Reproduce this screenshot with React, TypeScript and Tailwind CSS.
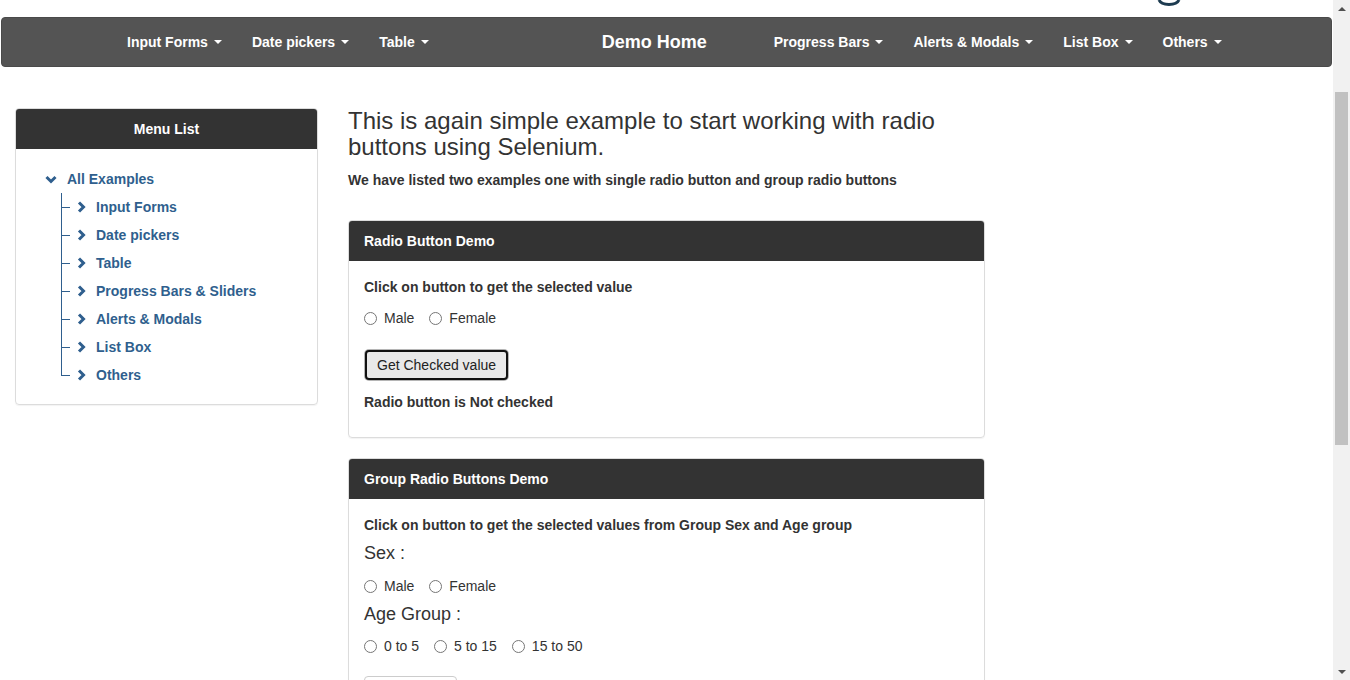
import React from 'react';

const font = { fontFamily: '"Liberation Sans", Arial, sans-serif' };

const Caret: React.FC = () => (
    <span className="inline-block ml-[6px] w-0 h-0 border-t-[4px] border-t-white border-x-[4px] border-x-transparent align-middle" />
);

const NavItem: React.FC<{ label: string }> = ({ label }) => (
    <div className="px-[15px] flex items-center text-[14px] font-bold text-white whitespace-nowrap">
        {label}
        <Caret />
    </div>
);

const ChevronRight: React.FC = () => (
    <svg width="9" height="12" viewBox="0 0 9 12" className="shrink-0">
        <polyline points="2,1.5 6.5,6 2,10.5" fill="none" stroke="#2f5f8e" strokeWidth="3" strokeLinejoin="miter" />
    </svg>
);

const ChevronDown: React.FC = () => (
    <svg width="12" height="9" viewBox="0 0 12 9" className="shrink-0">
        <polyline points="1.5,2 6,6.5 10.5,2" fill="none" stroke="#2f5f8e" strokeWidth="3" strokeLinejoin="miter" />
    </svg>
);

const TreeItem: React.FC<{ label: string; last?: boolean }> = ({ label, last }) => (
    <div className="flex items-center h-[28px]">
        <svg width="9" height="28" viewBox="0 0 9 28" className="shrink-0">
            <line x1="0.5" y1="0" x2="0.5" y2={last ? 14.5 : 28} stroke="#2f5f8e" strokeWidth="1" />
            <line x1="0" y1="14.5" x2="9" y2="14.5" stroke="#2f5f8e" strokeWidth="1" />
        </svg>
        <div className="ml-[7px]"><ChevronRight /></div>
        <span className="ml-[10px] text-[14px] font-bold text-[#2f5f8e] whitespace-nowrap">{label}</span>
    </div>
);

const Radio: React.FC<{ name: string; label: string }> = ({ name, label }) => (
    <label className="flex items-center gap-[7px] text-[14px] text-[#333]">
        <input type="radio" name={name} className="m-0 w-[13px] h-[13px]" />
        {label}
    </label>
);

const Panel: React.FC<{ title: string; children: React.ReactNode; className?: string }> = ({ title, children, className }) => (
    <div className={`border border-[#dcdcdc] rounded-[4px] overflow-hidden shadow-[0_1px_1px_rgba(0,0,0,0.05)] ${className ?? ''}`}>
        <div className="h-[40px] bg-[#333] flex items-center px-[15px] text-[14px] font-bold text-white">{title}</div>
        <div className="px-[15px]">{children}</div>
    </div>
);

const Scrollbar: React.FC = () => (
    <div className="w-[17px] h-[680px] bg-[#f1f1f1] flex flex-col shrink-0">
        <div className="h-[17px] flex items-center justify-center">
            <span className="w-0 h-0 border-b-[4px] border-b-[#505050] border-x-[4px] border-x-transparent" />
        </div>
        <div className="flex-1 px-[2px]">
            <div className="mt-[75px] h-[353px] bg-[#c1c1c1]" />
        </div>
        <div className="h-[17px] flex items-center justify-center">
            <span className="w-0 h-0 border-t-[4px] border-t-[#505050] border-x-[4px] border-x-transparent" />
        </div>
    </div>
);

const App: React.FC = () => {
    return (
        <div className="flex w-[1350px] h-[680px] overflow-hidden bg-white" style={font}>
            <div className="flex-1 h-[680px] overflow-hidden">
                {/* logo remainder above the navbar */}
                <div className="h-[17px] pl-[1157px]">
                    <svg width="26" height="6" viewBox="0 0 26 6">
                        <path d="M2 0 Q4 4.5 12 4.5 Q20 4.5 22 0" fill="none" stroke="#1d3b50" strokeWidth="3" />
                    </svg>
                </div>

                <nav className="h-[50px] mx-[1px] bg-[#545454] border border-[#4a4a4a] rounded-[4px] flex items-stretch pl-[110px]">
                    <NavItem label="Input Forms" />
                    <NavItem label="Date pickers" />
                    <NavItem label="Table" />
                    <div className="ml-[158px] flex items-center text-[18px] font-bold text-white whitespace-nowrap">Demo Home</div>
                    <div className="ml-[52px] flex">
                        <NavItem label="Progress Bars" />
                        <NavItem label="Alerts & Modals" />
                        <NavItem label="List Box" />
                        <NavItem label="Others" />
                    </div>
                </nav>

                <div className="flex pl-[15px] pt-[41px]">
                    <aside className="w-[303px] shrink-0">
                        <div className="border border-[#dcdcdc] rounded-[4px] overflow-hidden shadow-[0_1px_1px_rgba(0,0,0,0.05)]">
                            <div className="h-[40px] bg-[#333] flex items-center justify-center text-[14px] font-bold text-white">Menu List</div>
                            <div className="pt-[16px] pb-[15px] pl-[29px]">
                                <div className="flex items-center h-[28px]">
                                    <ChevronDown />
                                    <span className="ml-[10px] text-[14px] font-bold text-[#2f5f8e]">All Examples</span>
                                </div>
                                <div className="ml-[16px]">
                                    <TreeItem label="Input Forms" />
                                    <TreeItem label="Date pickers" />
                                    <TreeItem label="Table" />
                                    <TreeItem label="Progress Bars & Sliders" />
                                    <TreeItem label="Alerts & Modals" />
                                    <TreeItem label="List Box" />
                                    <TreeItem label="Others" last />
                                </div>
                            </div>
                        </div>
                    </aside>

                    <main className="ml-[30px] w-[637px] shrink-0 text-[#333]">
                        <h3 className="text-[24px] leading-[26px]">
                            This is again simple example to start working with radio buttons using Selenium.
                        </h3>
                        <p className="mt-[10px] text-[14px] font-bold leading-[20px]">
                            We have listed two examples one with single radio button and group radio buttons
                        </p>

                        <Panel title="Radio Button Demo" className="mt-[30px]">
                            <p className="pt-[16px] text-[14px] font-bold leading-[20px]">Click on button to get the selected value</p>
                            <div className="mt-[11px] h-[20px] flex items-center gap-[15px]">
                                <Radio name="single" label="Male" />
                                <Radio name="single" label="Female" />
                            </div>
                            <button className="mt-[22px] ml-[1px] h-[30px] px-[10px] text-[14px] text-[#222] bg-[#e9e9e9] border-2 border-[#111] rounded-[4px] ring-1 ring-[#b5b5b5]">
                                Get Checked value
                            </button>
                            <p className="mt-[12px] pb-[25px] text-[14px] font-bold leading-[20px]">Radio button is Not checked</p>
                        </Panel>

                        <Panel title="Group Radio Buttons Demo" className="mt-[20px]">
                            <p className="pt-[16px] text-[14px] font-bold leading-[20px]">
                                Click on button to get the selected values from Group Sex and Age group
                            </p>
                            <h4 className="mt-[8px] text-[18px] leading-[20px]">Sex :</h4>
                            <div className="mt-[13px] h-[20px] flex items-center gap-[15px]">
                                <Radio name="sex" label="Male" />
                                <Radio name="sex" label="Female" />
                            </div>
                            <h4 className="mt-[8px] text-[18px] leading-[20px]">Age Group :</h4>
                            <div className="mt-[12px] h-[20px] flex items-center gap-[15px]">
                                <Radio name="age" label="0 to 5" />
                                <Radio name="age" label="5 to 15" />
                                <Radio name="age" label="15 to 50" />
                            </div>
                            <button className="mt-[20px] h-[34px] w-[93px] bg-white border border-[#ccc] rounded-[4px]" aria-label="Get values" />
                        </Panel>
                    </main>
                </div>
            </div>
            <Scrollbar />
        </div>
    );
};

export default App;
